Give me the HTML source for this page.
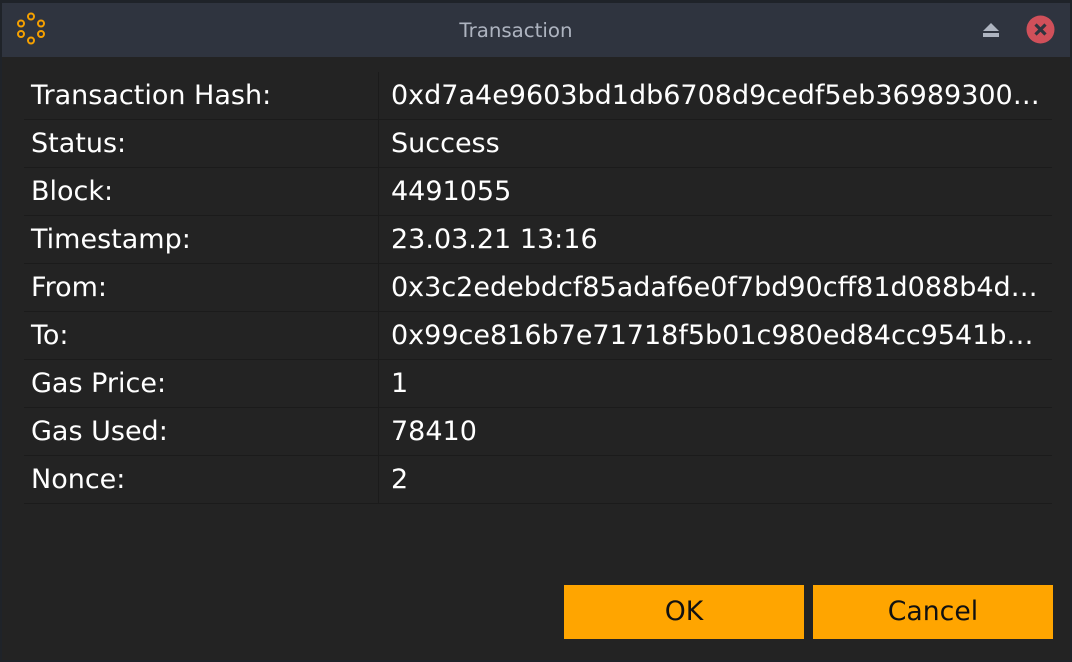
<!DOCTYPE html>
<html><head><style>
html,body{margin:0;padding:0;width:1072px;height:662px;overflow:hidden;background:#1f2329;}
*{box-sizing:border-box;}
.win{position:absolute;left:2px;top:3px;width:1068px;height:657px;background:#232323;}
.tb{position:absolute;left:0;top:0;width:1068px;height:54px;background:#2f343f;}
.title{position:absolute;left:0;width:1028px;top:16px;text-align:center;color:#aeb4c0;font:19.8px "DejaVu Sans","Liberation Sans",sans-serif;}
.row{position:absolute;left:22px;width:1028px;height:48px;border-bottom:1px solid #1b1b1b;font:27px "DejaVu Sans","Liberation Sans",sans-serif;color:#fff;}
.row .k{position:absolute;left:7px;top:8px;}
.row .v{position:absolute;left:367px;top:8px;white-space:nowrap;}
.col{position:absolute;left:376px;top:69px;width:1px;height:432px;background:#1b1b1b;}
.btn{position:absolute;top:582px;width:240px;height:54px;background:#ffa500;color:#111;font:26.7px "DejaVu Sans","Liberation Sans",sans-serif;text-align:center;line-height:54px;}
</style></head><body>
<div class="win">
<div class="tb">
<svg style="position:absolute;left:0;top:0" width="60" height="54" viewBox="0 0 60 54" fill="none" stroke="#f5a000" stroke-width="2">
<circle cx="29" cy="13.5" r="3"/><circle cx="39" cy="20.5" r="3"/><circle cx="39" cy="31" r="3"/><circle cx="29" cy="37.5" r="3"/><circle cx="19" cy="31" r="3"/><circle cx="19" cy="20.5" r="3"/></svg>
<div class="title">Transaction</div>
<svg style="position:absolute;left:980px;top:19px" width="18" height="16" viewBox="0 0 18 16" fill="#aeb4c0"><polygon points="9,1 17,9 1,9"/><rect x="1" y="11" width="16" height="4"/></svg>
<svg style="position:absolute;left:1024px;top:12px" width="30" height="30" viewBox="0 0 30 30"><circle cx="14.5" cy="14.5" r="14" fill="#d0505a"/><path d="M9.5 9.5L19.5 19.5M19.5 9.5L9.5 19.5" stroke="#2f343f" stroke-width="3.2"/></svg>
</div>
<div class="row" style="top:69px"><span class="k">Transaction Hash:</span><span class="v">0xd7a4e9603bd1db6708d9cedf5eb36989300…</span></div>
<div class="row" style="top:117px"><span class="k">Status:</span><span class="v">Success</span></div>
<div class="row" style="top:165px"><span class="k">Block:</span><span class="v">4491055</span></div>
<div class="row" style="top:213px"><span class="k">Timestamp:</span><span class="v">23.03.21 13:16</span></div>
<div class="row" style="top:261px"><span class="k">From:</span><span class="v">0x3c2edebdcf85adaf6e0f7bd90cff81d088b4d…</span></div>
<div class="row" style="top:309px"><span class="k">To:</span><span class="v">0x99ce816b7e71718f5b01c980ed84cc9541b…</span></div>
<div class="row" style="top:357px"><span class="k">Gas Price:</span><span class="v">1</span></div>
<div class="row" style="top:405px"><span class="k">Gas Used:</span><span class="v">78410</span></div>
<div class="row" style="top:453px"><span class="k">Nonce:</span><span class="v">2</span></div>
<div class="col"></div>
<div class="btn" style="left:562px">OK</div>
<div class="btn" style="left:811px">Cancel</div>
</div>
</body></html>
